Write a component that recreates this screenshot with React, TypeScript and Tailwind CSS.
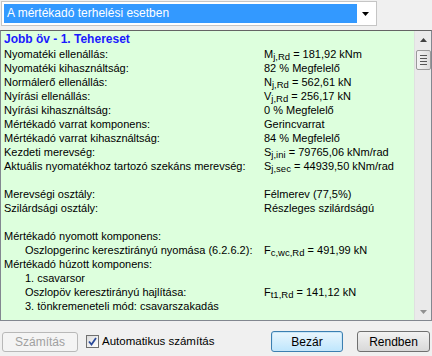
import React from "react";

type Row = {
	label?: string;
	indent?: boolean;
	value?: React.ReactNode;
};

const Sub = ({ base, sub, rest }: { base: string; sub: string; rest: string }) => (
	<span>
		{base}
		<span className="relative top-[2px] text-[9.5px]">{sub}</span>
		{rest}
	</span>
);

const rows: Row[] = [
	{ label: "Nyomatéki ellenállás:", value: <Sub base="M" sub="j,Rd" rest=" = 181,92 kNm" /> },
	{ label: "Nyomatéki kihasználtság:", value: "82 % Megfelelő" },
	{ label: "Normálerő ellenállás:", value: <Sub base="N" sub="j,Rd" rest=" = 562,61 kN" /> },
	{ label: "Nyírási ellenállás:", value: <Sub base="V" sub="j,Rd" rest=" = 256,17 kN" /> },
	{ label: "Nyírási kihasználtság:", value: "0 % Megfelelő" },
	{ label: "Mértékadó varrat komponens:", value: "Gerincvarrat" },
	{ label: "Mértékadó varrat kihasználtság:", value: "84 % Megfelelő" },
	{ label: "Kezdeti merevség:", value: <Sub base="S" sub="j,ini" rest=" = 79765,06 kNm/rad" /> },
	{
		label: "Aktuális nyomatékhoz tartozó szekáns merevség:",
		value: <Sub base="S" sub="j,sec" rest=" = 44939,50 kNm/rad" />,
	},
	{},
	{ label: "Merevségi osztály:", value: "Félmerev (77,5%)" },
	{ label: "Szilárdsági osztály:", value: "Részleges szilárdságú" },
	{},
	{ label: "Mértékadó nyomott komponens:" },
	{
		label: "Oszlopgerinc keresztirányú nyomása (6.2.6.2):",
		indent: true,
		value: <Sub base="F" sub="c,wc,Rd" rest=" = 491,99 kN" />,
	},
	{ label: "Mértékadó húzott komponens:" },
	{ label: "1. csavarsor", indent: true },
	{
		label: "Oszlopöv keresztirányú hajlítása:",
		indent: true,
		value: <Sub base="F" sub="t1,Rd" rest=" = 141,12 kN" />,
	},
	{ label: "3. tönkremeneteli mód: csavarszakadás", indent: true },
];

const Scrollbar = () => (
	<div className="w-[17px] bg-[#eaeaea] flex flex-col items-center border-l border-[#e0e0e0]">
		<div className="h-[17px] w-full flex items-center justify-center">
			<svg width="7" height="4" viewBox="0 0 7 4">
				<path d="M0 4 L3.5 0 L7 4 Z" fill="#404040" />
			</svg>
		</div>
		<div className="mt-[2px] w-[15px] h-[20px] rounded-[2px] border border-[#9a9a9a] bg-gradient-to-r from-[#f4f4f4] to-[#dcdcdc] flex flex-col items-center justify-center gap-[2px]">
			<div className="w-[7px] h-px bg-[#555]" />
			<div className="w-[7px] h-px bg-[#555]" />
			<div className="w-[7px] h-px bg-[#555]" />
			<div className="w-[7px] h-px bg-[#555]" />
		</div>
		<div className="flex-1" />
		<div className="h-[17px] w-full flex items-center justify-center">
			<svg width="7" height="4" viewBox="0 0 7 4">
				<path d="M0 0 L7 0 L3.5 4 Z" fill="#909090" />
			</svg>
		</div>
	</div>
);

export default function App() {
	return (
		<div
			className="w-[432px] h-[356px] bg-[#f0f0f0] flex flex-col overflow-hidden"
			style={{ fontFamily: '"Liberation Sans", Arial, sans-serif' }}
		>
			{/* combo */}
			<div className="pl-px pt-px">
				<div className="w-[376px] h-[25px] bg-white border border-[#c5c5c5] flex items-center p-[2px]">
					<div className="flex-1 h-[19px] bg-[#3399ff] text-white text-[12px] leading-[19px] pl-[3px]">
						A mértékadó terhelési esetben
					</div>
					<div className="w-[17px] flex items-center justify-center">
						<svg width="7" height="4" viewBox="0 0 7 4">
							<path d="M0 0 L7 0 L3.5 4 Z" fill="#000" />
						</svg>
					</div>
				</div>
			</div>

			{/* panel */}
			<div className="mt-[4px] h-[291px] border border-[#828790] border-t-[#646464] bg-[#ddffdd] flex">
				<div className="flex-1 pl-[3px] pt-px text-[11px] text-black">
					<div className="text-[12px] font-bold leading-[15px] text-[#1a1aff]">
						Jobb öv - 1. Tehereset
					</div>
					{rows.map((r, i) => (
						<div key={i} className="flex h-[14px] leading-[14px] whitespace-nowrap">
							<div className={`w-[260px] ${r.indent ? "pl-[21px]" : ""}`}>{r.label}</div>
							<div>{r.value}</div>
						</div>
					))}
				</div>
				<Scrollbar />
			</div>

			{/* footer */}
			<div className="mt-[10px] flex items-center px-[2px] text-[12px]">
				<button className="w-[76px] h-[20px] border border-[#b8b8b8] rounded-[3px] bg-[#f4f4f4] text-[#a0a0a0]">
					Számítás
				</button>
				<label className="ml-[8px] flex items-center gap-[3px] text-[11.5px]">
					<span className="w-[13px] h-[13px] border border-[#707070] bg-gradient-to-br from-[#dcdcdc] to-white flex items-center justify-center">
						<svg width="9" height="9" viewBox="0 0 9 9">
							<path d="M1 4.5 L3.5 7.5 L8 1" stroke="#2a4a9a" strokeWidth="1.8" fill="none" />
						</svg>
					</span>
					<span>Automatikus számítás</span>
				</label>
				<div className="flex-1" />
				<button className="w-[72px] h-[21px] border border-[#3c7fb1] rounded-[3px] bg-gradient-to-b from-[#eaf6fd] to-[#bee6fd] shadow-[inset_0_0_0_1px_#c8e6f8]">
					Bezár
				</button>
				<button className="ml-[14px] w-[73px] h-[21px] border border-[#707070] rounded-[3px] bg-gradient-to-b from-[#f2f2f2] to-[#d8d8d8]">
					Rendben
				</button>
			</div>
		</div>
	);
}
